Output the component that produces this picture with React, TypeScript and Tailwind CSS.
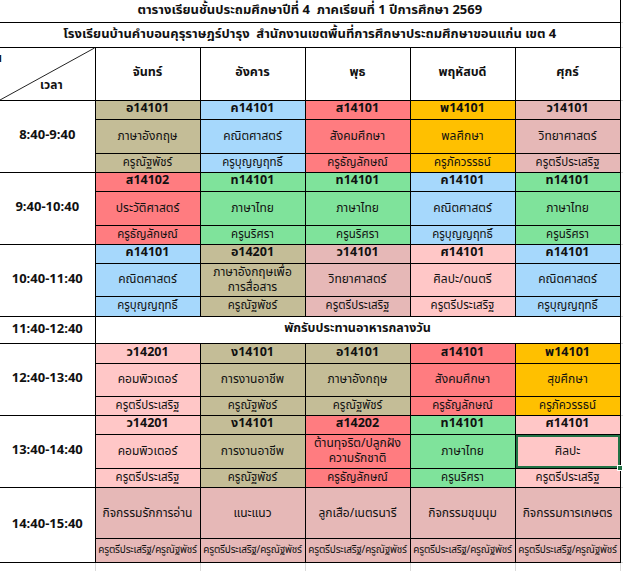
import React from "react";

type Slot = { code: string; subject: string; teacher: string; color: string };

const TAN = "bg-[#c4bd97]";
const BLUE = "bg-[#a6d8fc]";
const RED = "bg-[#ff7c80]";
const GOLD = "bg-[#ffc000]";
const DUSTY = "bg-[#e6b8b7]";
const PINK = "bg-[#ffc7c7]";
const GREEN = "bg-[#7fe39b]";

const days = ["จันทร์", "อังคาร", "พุธ", "พฤหัสบดี", "ศุกร์"];

const rows: { time: string; slots: Slot[]; heights: [string, string, string] }[] = [
    {
        time: "8:40-9:40",
        heights: ["h-[19px]", "h-[34px]", "h-[19px]"],
        slots: [
            { code: "อ14101", subject: "ภาษาอังกฤษ", teacher: "ครูณัฐพัชร์", color: TAN },
            { code: "ค14101", subject: "คณิตศาสตร์", teacher: "ครูบุญญฤทธิ์", color: BLUE },
            { code: "ส14101", subject: "สังคมศึกษา", teacher: "ครูธัญลักษณ์", color: RED },
            { code: "พ14101", subject: "พลศึกษา", teacher: "ครูภัควรรธน์", color: GOLD },
            { code: "ว14101", subject: "วิทยาศาสตร์", teacher: "ครูตรีประเสริฐ", color: DUSTY },
        ],
    },
    {
        time: "9:40-10:40",
        heights: ["h-[19px]", "h-[34px]", "h-[19px]"],
        slots: [
            { code: "ส14102", subject: "ประวัติศาสตร์", teacher: "ครูธัญลักษณ์", color: RED },
            { code: "ท14101", subject: "ภาษาไทย", teacher: "ครูนริศรา", color: GREEN },
            { code: "ท14101", subject: "ภาษาไทย", teacher: "ครูนริศรา", color: GREEN },
            { code: "ค14101", subject: "คณิตศาสตร์", teacher: "ครูบุญญฤทธิ์", color: BLUE },
            { code: "ท14101", subject: "ภาษาไทย", teacher: "ครูนริศรา", color: GREEN },
        ],
    },
    {
        time: "10:40-11:40",
        heights: ["h-[19px]", "h-[33px]", "h-[20px]"],
        slots: [
            { code: "ค14101", subject: "คณิตศาสตร์", teacher: "ครูบุญญฤทธิ์", color: BLUE },
            { code: "อ14201", subject: "ภาษาอังกฤษเพื่อการสื่อสาร", teacher: "ครูณัฐพัชร์", color: TAN },
            { code: "ว14101", subject: "วิทยาศาสตร์", teacher: "ครูตรีประเสริฐ", color: DUSTY },
            { code: "ศ14101", subject: "ศิลปะ/ดนตรี", teacher: "ครูตรีประเสริฐ", color: PINK },
            { code: "ค14101", subject: "คณิตศาสตร์", teacher: "ครูบุญญฤทธิ์", color: BLUE },
        ],
    },
];

const afternoon: typeof rows = [
    {
        time: "12:40-13:40",
        heights: ["h-[20px]", "h-[33px]", "h-[19px]"],
        slots: [
            { code: "ว14201", subject: "คอมพิวเตอร์", teacher: "ครูตรีประเสริฐ", color: PINK },
            { code: "ง14101", subject: "การงานอาชีพ", teacher: "ครูณัฐพัชร์", color: TAN },
            { code: "อ14101", subject: "ภาษาอังกฤษ", teacher: "ครูณัฐพัชร์", color: TAN },
            { code: "ส14101", subject: "สังคมศึกษา", teacher: "ครูธัญลักษณ์", color: RED },
            { code: "พ14101", subject: "สุขศึกษา", teacher: "ครูภัควรรธน์", color: GOLD },
        ],
    },
    {
        time: "13:40-14:40",
        heights: ["h-[19px]", "h-[34px]", "h-[19px]"],
        slots: [
            { code: "ว14201", subject: "คอมพิวเตอร์", teacher: "ครูตรีประเสริฐ", color: PINK },
            { code: "ง14101", subject: "การงานอาชีพ", teacher: "ครูณัฐพัชร์", color: TAN },
            { code: "ส14202", subject: "ต้านทุจริต/ปลูกฝังความรักชาติ", teacher: "ครูธัญลักษณ์", color: RED },
            { code: "ท14101", subject: "ภาษาไทย", teacher: "ครูนริศรา", color: GREEN },
            { code: "ศ14101", subject: "ศิลปะ", teacher: "ครูตรีประเสริฐ", color: PINK },
        ],
    },
];

const activities = ["กิจกรรมรักการอ่าน", "แนะแนว", "ลูกเสือ/เนตรนารี", "กิจกรรมชุมนุม", "กิจกรรมการเกษตร"];

const cell = "border border-black text-center align-middle p-0";
const gridCell = "border-r border-[#d9d9d9]";

const PeriodRows = ({ row, selectLast }: { row: (typeof rows)[number]; selectLast?: boolean }) => (
    <>
        <tr className={row.heights[0]}>
            <td rowSpan={3} className={`${cell} border-l-0 text-[13px] font-bold`}>{row.time}</td>
            {row.slots.map((s, i) => (
                <td key={i} className={`${cell} ${s.color} text-[12.5px] font-bold leading-none`}>{s.code}</td>
            ))}
            <td className={gridCell} />
        </tr>
        <tr className={row.heights[1]}>
            {row.slots.map((s, i) => {
                const selected = selectLast && i === 4;
                return (
                    <td
                        key={i}
                        className={`${cell} ${s.color} text-[12px] leading-[15px] px-1 ${selected ? "relative shadow-[inset_0_0_0_2px_#217346]" : ""}`}
                    >
                        {s.subject}
                        {selected && (
                            <span className="absolute -bottom-[3px] -right-[3px] w-[6px] h-[6px] bg-[#217346] border border-white" />
                        )}
                    </td>
                );
            })}
            <td className={gridCell} />
        </tr>
        <tr className={row.heights[2]}>
            {row.slots.map((s, i) => (
                <td key={i} className={`${cell} ${s.color} text-[11.5px] leading-none`}>{s.teacher}</td>
            ))}
            <td className={`${gridCell} border-b border-b-[#d9d9d9]`} />
        </tr>
    </>
);

export default function App() {
    return (
        <div
            className="w-[623px] h-[571px] overflow-hidden bg-white text-[#111]"
            style={{ fontFamily: 'Tahoma, "Noto Sans Thai", "Noto Sans", "DejaVu Sans", sans-serif' }}
        >
            <table className="table-fixed border-collapse w-[623px]">
                <colgroup>
                    <col className="w-[95px]" />
                    <col className="w-[105px]" />
                    <col className="w-[105px]" />
                    <col className="w-[105px]" />
                    <col className="w-[105px]" />
                    <col className="w-[105px]" />
                    <col className="w-[3px]" />
                </colgroup>
                <tbody>
                    <tr className="h-[22px]">
                        <td colSpan={6} className="border-r border-b border-black text-center text-[13px] font-bold p-0">
                            ตารางเรียนชั้นประถมศึกษาปีที่ 4&nbsp; ภาคเรียนที่ 1 ปีการศึกษา 2569
                        </td>
                        <td className={`${gridCell} border-b border-b-[#d9d9d9]`} />
                    </tr>
                    <tr className="h-[25px]">
                        <td colSpan={6} className="border-r border-b border-black text-center text-[13px] font-bold p-0">
                            โรงเรียนบ้านคำบอนคุรุราษฎร์ปารุง&nbsp; สำนักงานเขตพื้นที่การศึกษาประถมศึกษาขอนแก่น เขต 4
                        </td>
                        <td className={`${gridCell} border-b border-b-[#d9d9d9]`} />
                    </tr>
                    <tr className="h-[52px]">
                        <td className="relative border-r border-b border-black p-0 overflow-hidden">
                            <svg className="absolute inset-0 w-full h-full" viewBox="0 0 95 52" preserveAspectRatio="none">
                                <line x1="0" y1="52" x2="95" y2="0" stroke="#222" strokeWidth="1" />
                            </svg>
                            <div className="relative flex flex-col justify-between h-[52px] text-[12px] font-bold">
                                <span className="-ml-[12px] pt-[4px] leading-none">วัน</span>
                                <span className="pl-[40px] pb-[9px] leading-none">เวลา</span>
                            </div>
                        </td>
                        {days.map((d) => (
                            <td key={d} className={`${cell} text-[12.5px] font-bold`}>{d}</td>
                        ))}
                        <td className={`${gridCell} border-b border-b-[#d9d9d9]`} />
                    </tr>
                    {rows.map((r) => (
                        <PeriodRows key={r.time} row={r} />
                    ))}
                    <tr className="h-[27px]">
                        <td className={`${cell} border-l-0 text-[13px] font-bold`}>11:40-12:40</td>
                        <td colSpan={5} className={`${cell} text-[12.5px] font-bold`}>พักรับประทานอาหารกลางวัน</td>
                        <td className={`${gridCell} border-b border-b-[#d9d9d9]`} />
                    </tr>
                    {afternoon.map((r, i) => (
                        <PeriodRows key={r.time} row={r} selectLast={i === 1} />
                    ))}
                    <tr className="h-[51px]">
                        <td rowSpan={2} className={`${cell} border-l-0 text-[13px] font-bold`}>14:40-15:40</td>
                        {activities.map((a) => (
                            <td key={a} className={`${cell} ${DUSTY} text-[12px]`}>{a}</td>
                        ))}
                        <td className={gridCell} />
                    </tr>
                    <tr className="h-[24px]">
                        {activities.map((a) => (
                            <td key={a} className={`${cell} ${DUSTY} text-[10px] tracking-[-0.2px] whitespace-nowrap overflow-hidden`}>
                                ครูตรีประเสริฐ/ครูณัฐพัชร์
                            </td>
                        ))}
                        <td className={`${gridCell} border-b border-b-[#d9d9d9]`} />
                    </tr>
                    <tr className="h-[20px]">
                        <td className="border-r border-[#d9d9d9]" />
                        {activities.map((a) => (
                            <td key={a} className="border-r border-[#d9d9d9]" />
                        ))}
                        <td />
                    </tr>
                </tbody>
            </table>
        </div>
    );
}
